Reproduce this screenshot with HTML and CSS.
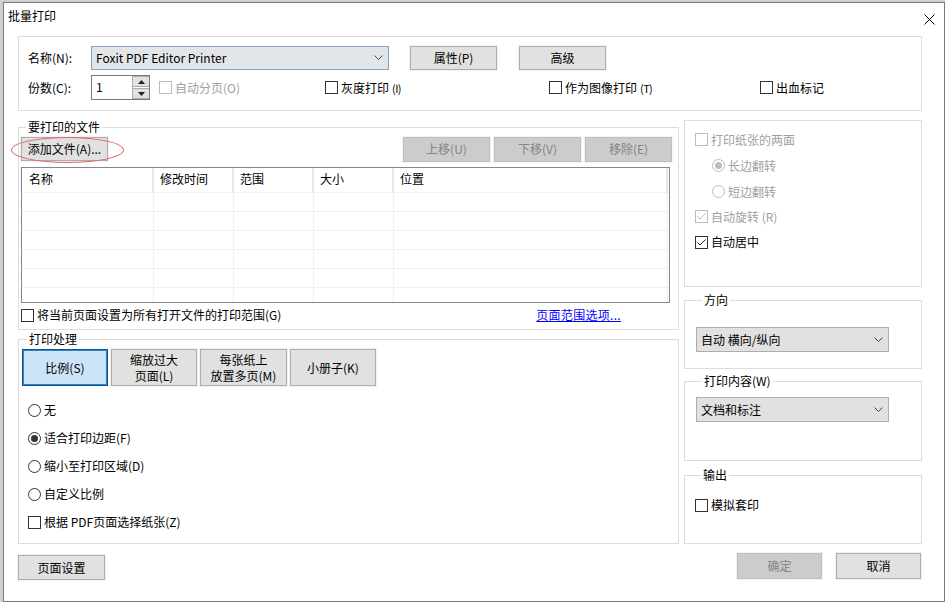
FILE: index.html
```html
<!DOCTYPE html>
<html lang="zh-CN">
<head>
<meta charset="utf-8">
<title>批量打印</title>
<link rel="stylesheet" href="styles.css">
</head>
<body>
<div class="window">
  <div class="titlebar">
    <span class="title">批量打印</span>
    <svg class="close" width="11" height="11" viewBox="0 0 11 11"><path d="M0.5 0.5 L10.5 10.5 M10.5 0.5 L0.5 10.5" stroke="#000" stroke-width="1" fill="none"/></svg>
  </div>
  <div class="main">
    <div class="printer-group">
      <div class="prow">
        <span class="lbl">名称(N):</span>
        <div class="combo combo-focus"><span class="combo-text">Foxit PDF Editor Printer</span><svg class="chev" width="9" height="5" viewBox="0 0 9 5"><path d="M0.5 0.5 L4.5 4.5 L8.5 0.5" stroke="#444" fill="none"/></svg></div>
        <button class="btn btn-prop">属性(P)</button>
        <button class="btn btn-adv">高级</button>
      </div>
      <div class="prow prow2">
        <span class="lbl">份数(C):</span>
        <div class="spin">
          <span class="spin-val">1</span>
          <span class="spin-btns">
            <span class="sb"><svg width="7" height="4" viewBox="0 0 7 4"><path d="M3.5 0 L7 4 L0 4 Z" fill="#222"/></svg></span>
            <span class="sb"><svg width="7" height="4" viewBox="0 0 7 4"><path d="M0 0 L7 0 L3.5 4 Z" fill="#222"/></svg></span>
          </span>
        </div>
        <label class="chk dis w-collate"><span class="cb"></span>自动分页(O)</label>
        <label class="chk w-gray"><span class="cb"></span>灰度打印<span class="small">(I)</span></label>
        <label class="chk w-image"><span class="cb"></span>作为图像打印<span class="small">(T)</span></label>
        <label class="chk"><span class="cb"></span>出血标记</label>
      </div>
    </div>

    <div class="col-left">
      <fieldset class="grp files">
        <legend>要打印的文件</legend>
        <div class="files-bar">
          <span class="annot"><button class="btn btn-add">添加文件(A)...</button></span>
          <div class="move-btns">
            <button class="btn btn-dis">上移(U)</button>
            <button class="btn btn-dis">下移(V)</button>
            <button class="btn btn-dis">移除(E)</button>
          </div>
        </div>
        <div class="filelist">
          <table>
            <thead>
              <tr><th class="c1">名称</th><th class="c2">修改时间</th><th class="c3">范围</th><th class="c4">大小</th><th class="c5">位置</th><th class="c6"></th></tr>
            </thead>
            <tbody>
              <tr><td></td><td></td><td></td><td></td><td></td><td></td></tr>
              <tr><td></td><td></td><td></td><td></td><td></td><td></td></tr>
              <tr><td></td><td></td><td></td><td></td><td></td><td></td></tr>
              <tr><td></td><td></td><td></td><td></td><td></td><td></td></tr>
              <tr><td></td><td></td><td></td><td></td><td></td><td></td></tr>
              <tr><td></td><td></td><td></td><td></td><td></td><td></td></tr>
            </tbody>
          </table>
        </div>
        <div class="files-foot">
          <label class="chk"><span class="cb"></span>将当前页面设置为所有打开文件的打印范围(G)</label>
          <a class="link" href="#">页面范围选项...</a>
        </div>
      </fieldset>

      <fieldset class="grp handling">
        <legend>打印处理</legend>
        <div class="tabs">
          <button class="tab tab-on">比例(S)</button>
          <button class="tab">缩放过大<br>页面(L)</button>
          <button class="tab tab-wide">每张纸上<br>放置多页(M)</button>
          <button class="tab">小册子(K)</button>
        </div>
        <div class="opts">
          <label class="opt"><span class="rb"></span>无</label>
          <label class="opt"><span class="rb on"></span>适合打印边距(F)</label>
          <label class="opt"><span class="rb"></span>缩小至打印区域(D)</label>
          <label class="opt"><span class="rb"></span>自定义比例</label>
          <label class="opt"><span class="cb"></span>根据 PDF页面选择纸张(Z)</label>
        </div>
      </fieldset>

      <div class="left-foot">
        <button class="btn btn-setup">页面设置</button>
      </div>
    </div>

    <div class="col-right">
      <div class="duplex">
        <label class="drow dis"><span class="cb"></span>打印纸张的两面</label>
        <label class="drow dis indent r2"><span class="rb on"></span>长边翻转</label>
        <label class="drow dis indent"><span class="rb"></span>短边翻转</label>
        <label class="drow dis"><span class="cb checked"><svg width="11" height="11" viewBox="0 0 11 11"><path d="M1.5 5.5 L4 8 L9.5 2.5" stroke="#bcbcbc" fill="none"/></svg></span>自动旋转 (R)</label>
        <label class="drow r3"><span class="cb checked"><svg width="11" height="11" viewBox="0 0 11 11"><path d="M1.5 5.5 L4 8 L9.5 2.5" stroke="#222" fill="none"/></svg></span>自动居中</label>
      </div>

      <fieldset class="grp rgrp orient">
        <legend>方向</legend>
        <div class="combo sel"><span class="combo-text">自动 横向/纵向</span><svg class="chev" width="9" height="5" viewBox="0 0 9 5"><path d="M0.5 0.5 L4.5 4.5 L8.5 0.5" stroke="#444" fill="none"/></svg></div>
      </fieldset>

      <fieldset class="grp rgrp content">
        <legend>打印内容(W)</legend>
        <div class="combo sel"><span class="combo-text">文档和标注</span><svg class="chev" width="9" height="5" viewBox="0 0 9 5"><path d="M0.5 0.5 L4.5 4.5 L8.5 0.5" stroke="#444" fill="none"/></svg></div>
      </fieldset>

      <fieldset class="grp rgrp output">
        <legend>输出</legend>
        <label class="chk out-chk"><span class="cb"></span>模拟套印</label>
      </fieldset>

      <div class="right-foot">
        <button class="btn btn-dis btn-ok">确定</button>
        <button class="btn btn-cancel">取消</button>
      </div>
    </div>
  </div>
</div>
</body>
</html>
```

FILE: styles.css
```css
* { box-sizing: border-box; }

body {
  margin: 0;
  background: #cfcfcf;
  font-family: "Noto Sans CJK SC", "Noto Sans", sans-serif;
  font-size: 12px;
  line-height: 16px;
  color: #000;
}

.window {
  margin: 2px 0 0 3px;
  width: 942px;
  height: 600px;
  background: #fff;
  border: 1px solid #7a7a7a;
  overflow: hidden;
}

.titlebar {
  height: 33px;
  display: flex;
  align-items: flex-start;
  justify-content: space-between;
  padding: 5px 9px 0 4px;
}

.close { margin-top: 6px; }

.main {
  display: grid;
  grid-template-columns: 661px 238px;
  column-gap: 5px;
  padding-left: 14px;
}

/* ---------- printer group ---------- */
.printer-group {
  grid-column: 1 / -1;
  height: 75px;
  border: 1px solid #dcdcdc;
  padding: 8px 0 0 9px;
}

.prow {
  display: flex;
  align-items: center;
  height: 25px;
}

.prow2 { margin-top: 5px; }

.lbl { width: 63px; }

.combo {
  display: flex;
  align-items: center;
  justify-content: space-between;
  height: 24px;
  background: #e1e1e1;
  border: 1px solid #adadad;
  padding: 0 5px 0 4px;
}

.combo-focus {
  width: 298px;
  background: #e3e6e9;
  border-color: #8aa3c0;
}

.btn {
  font: inherit;
  color: #000;
  background: #e1e1e1;
  border: 1px solid #adadad;
  box-shadow: 0 0 0 1px #f2f2f2;
  padding: 0;
  height: 24px;
  width: 87px;
}

.btn-prop { margin-left: 21px; }
.btn-adv { margin-left: 22px; }

.spin {
  display: flex;
  width: 59px;
  height: 25px;
  border: 1px solid #7a7a7a;
}

.spin-val {
  flex: 1;
  padding-left: 4px;
  line-height: 21px;
}

.spin-btns {
  width: 17px;
  display: flex;
  flex-direction: column;
  gap: 1px;
  border-left: 1px solid #adadad;
}

.sb {
  flex: 1;
  display: flex;
  align-items: center;
  justify-content: center;
  background: #e1e1e1;
  border-top: 1px solid #adadad;
  border-bottom: 1px solid #adadad;
}

/* checkbox / radio */
.chk, .opt, .drow {
  display: flex;
  align-items: center;
  gap: 3px;
  white-space: nowrap;
}

.cb {
  width: 13px;
  height: 13px;
  flex: none;
  border: 1px solid #333;
  background: #fff;
  display: flex;
  align-items: center;
  justify-content: center;
}

.rb {
  width: 13px;
  height: 13px;
  flex: none;
  border: 1px solid #333;
  border-radius: 50%;
  background: #fff;
  display: flex;
  align-items: center;
  justify-content: center;
}

.rb.on::after {
  content: "";
  width: 7px;
  height: 7px;
  border-radius: 50%;
  background: #333;
}

.dis { color: #a0a0a0; }
.dis .cb, .dis .rb { border-color: #bcbcbc; }
.dis .rb.on::after { background: #bcbcbc; }

.small { font-size: 11px; letter-spacing: -0.6px; }

.w-collate { margin-left: 9px; width: 166px; }
.w-gray { width: 224px; }
.w-image { width: 211px; }

/* ---------- fieldsets ---------- */
.grp {
  margin: 0;
  padding: 0;
  border: 1px solid #dcdcdc;
  min-width: 0;
}

.grp legend {
  padding: 0 2px;
  margin-left: 5px;
  line-height: 16px;
}

.rgrp legend { margin-left: 6px; }

.col-left {
  margin-top: 8px;
  display: flex;
  flex-direction: column;
}

.files {
  height: 211px;
  padding: 0 6px 0 2px;
}

.files-bar {
  margin-top: 1px;
  height: 26px;
  display: flex;
  align-items: center;
  justify-content: space-between;
}

.annot { position: relative; display: flex; }

.annot::after {
  content: "";
  position: absolute;
  left: -10px;
  top: 0;
  width: 111px;
  height: 24px;
  border: 1px solid #e06868;
  border-radius: 50%;
}

.btn-add { width: 87px; height: 24px; }

.move-btns {
  display: flex;
  gap: 4px;
}

.btn-dis {
  background: #cccccc;
  border-color: #bfbfbf;
  color: #838383;
  height: 25px;
}

.filelist {
  margin-top: 5px;
  width: 649px;
  height: 136px;
  border: 1px solid #828790;
  overflow: hidden;
}

.filelist table {
  border-collapse: collapse;
  table-layout: fixed;
  width: 647px;
}

.filelist th {
  height: 24px;
  font-weight: normal;
  text-align: left;
  padding: 0 0 1px 6px;
  border-right: 2px solid #e8e8e8;
  border-bottom: 1px solid #f0f0f0;
}

.filelist td {
  height: 19px;
  padding: 0;
  border-right: 1px solid #efefef;
  border-bottom: 1px solid #efefef;
}

.filelist .c1 { width: 131px; padding-left: 7px; }
.filelist .c2, .filelist .c3, .filelist .c4 { width: 80px; }
.filelist .c5 { width: 274px; }
.filelist th.c6, .filelist td:last-child { border-right: 0; }

.files-foot {
  margin-top: 2px;
  height: 20px;
  display: flex;
  align-items: center;
  justify-content: space-between;
  padding-right: 51px;
}

.link {
  color: #0000ff;
  text-decoration: underline;
  letter-spacing: 0.3px;
}

.handling {
  margin-top: 1px;
  height: 213px;
  padding: 0 0 0 3px;
}

.tabs {
  margin-top: 2px;
  display: flex;
  gap: 3px;
}

.tab {
  font: inherit;
  line-height: 16px;
  color: #000;
  width: 86px;
  height: 37px;
  padding: 0;
  background: #e1e1e1;
  border: 1px solid #adadad;
  box-shadow: 0 0 0 1px #f2f2f2;
}

.tab-wide { width: 87px; }

.tab-on {
  background: #cce4f7;
  border: 1px solid #005499;
  box-shadow: inset 0 0 0 1px #3e7fbd;
}

.opts {
  margin-top: 10px;
  padding-left: 6px;
  display: flex;
  flex-direction: column;
}

.opt { height: 28px; }

.left-foot { margin-top: 11px; }

.btn-setup { height: 25px; }

/* ---------- right column ---------- */
.col-right {
  margin-top: 9px;
  display: flex;
  flex-direction: column;
}

.duplex {
  height: 167px;
  border: 1px solid #dcdcdc;
  padding: 6px 0 0 10px;
}

.drow { height: 25px; }
.drow.r2 { height: 27px; }
.drow.r3 { height: 26px; }
.drow.indent { padding-left: 17px; }

.orient {
  margin-top: 5px;
  height: 77px;
  padding: 0 0 0 11px;
}

.orient .sel { margin-top: 19px; }

.sel {
  width: 193px;
  height: 25px;
}

.content {
  margin-top: 4px;
  height: 88px;
  padding: 0 0 0 11px;
}

.content .sel { margin-top: 8px; }

.output {
  margin-top: 6px;
  height: 77px;
  padding: 0 0 0 10px;
}

.out-chk { margin-top: 10px; height: 24px; }

.right-foot {
  margin-top: 9px;
  display: flex;
  justify-content: flex-end;
  gap: 14px;
  padding-right: 1px;
}

.btn-ok, .btn-cancel { width: 85px; height: 26px; }
```
